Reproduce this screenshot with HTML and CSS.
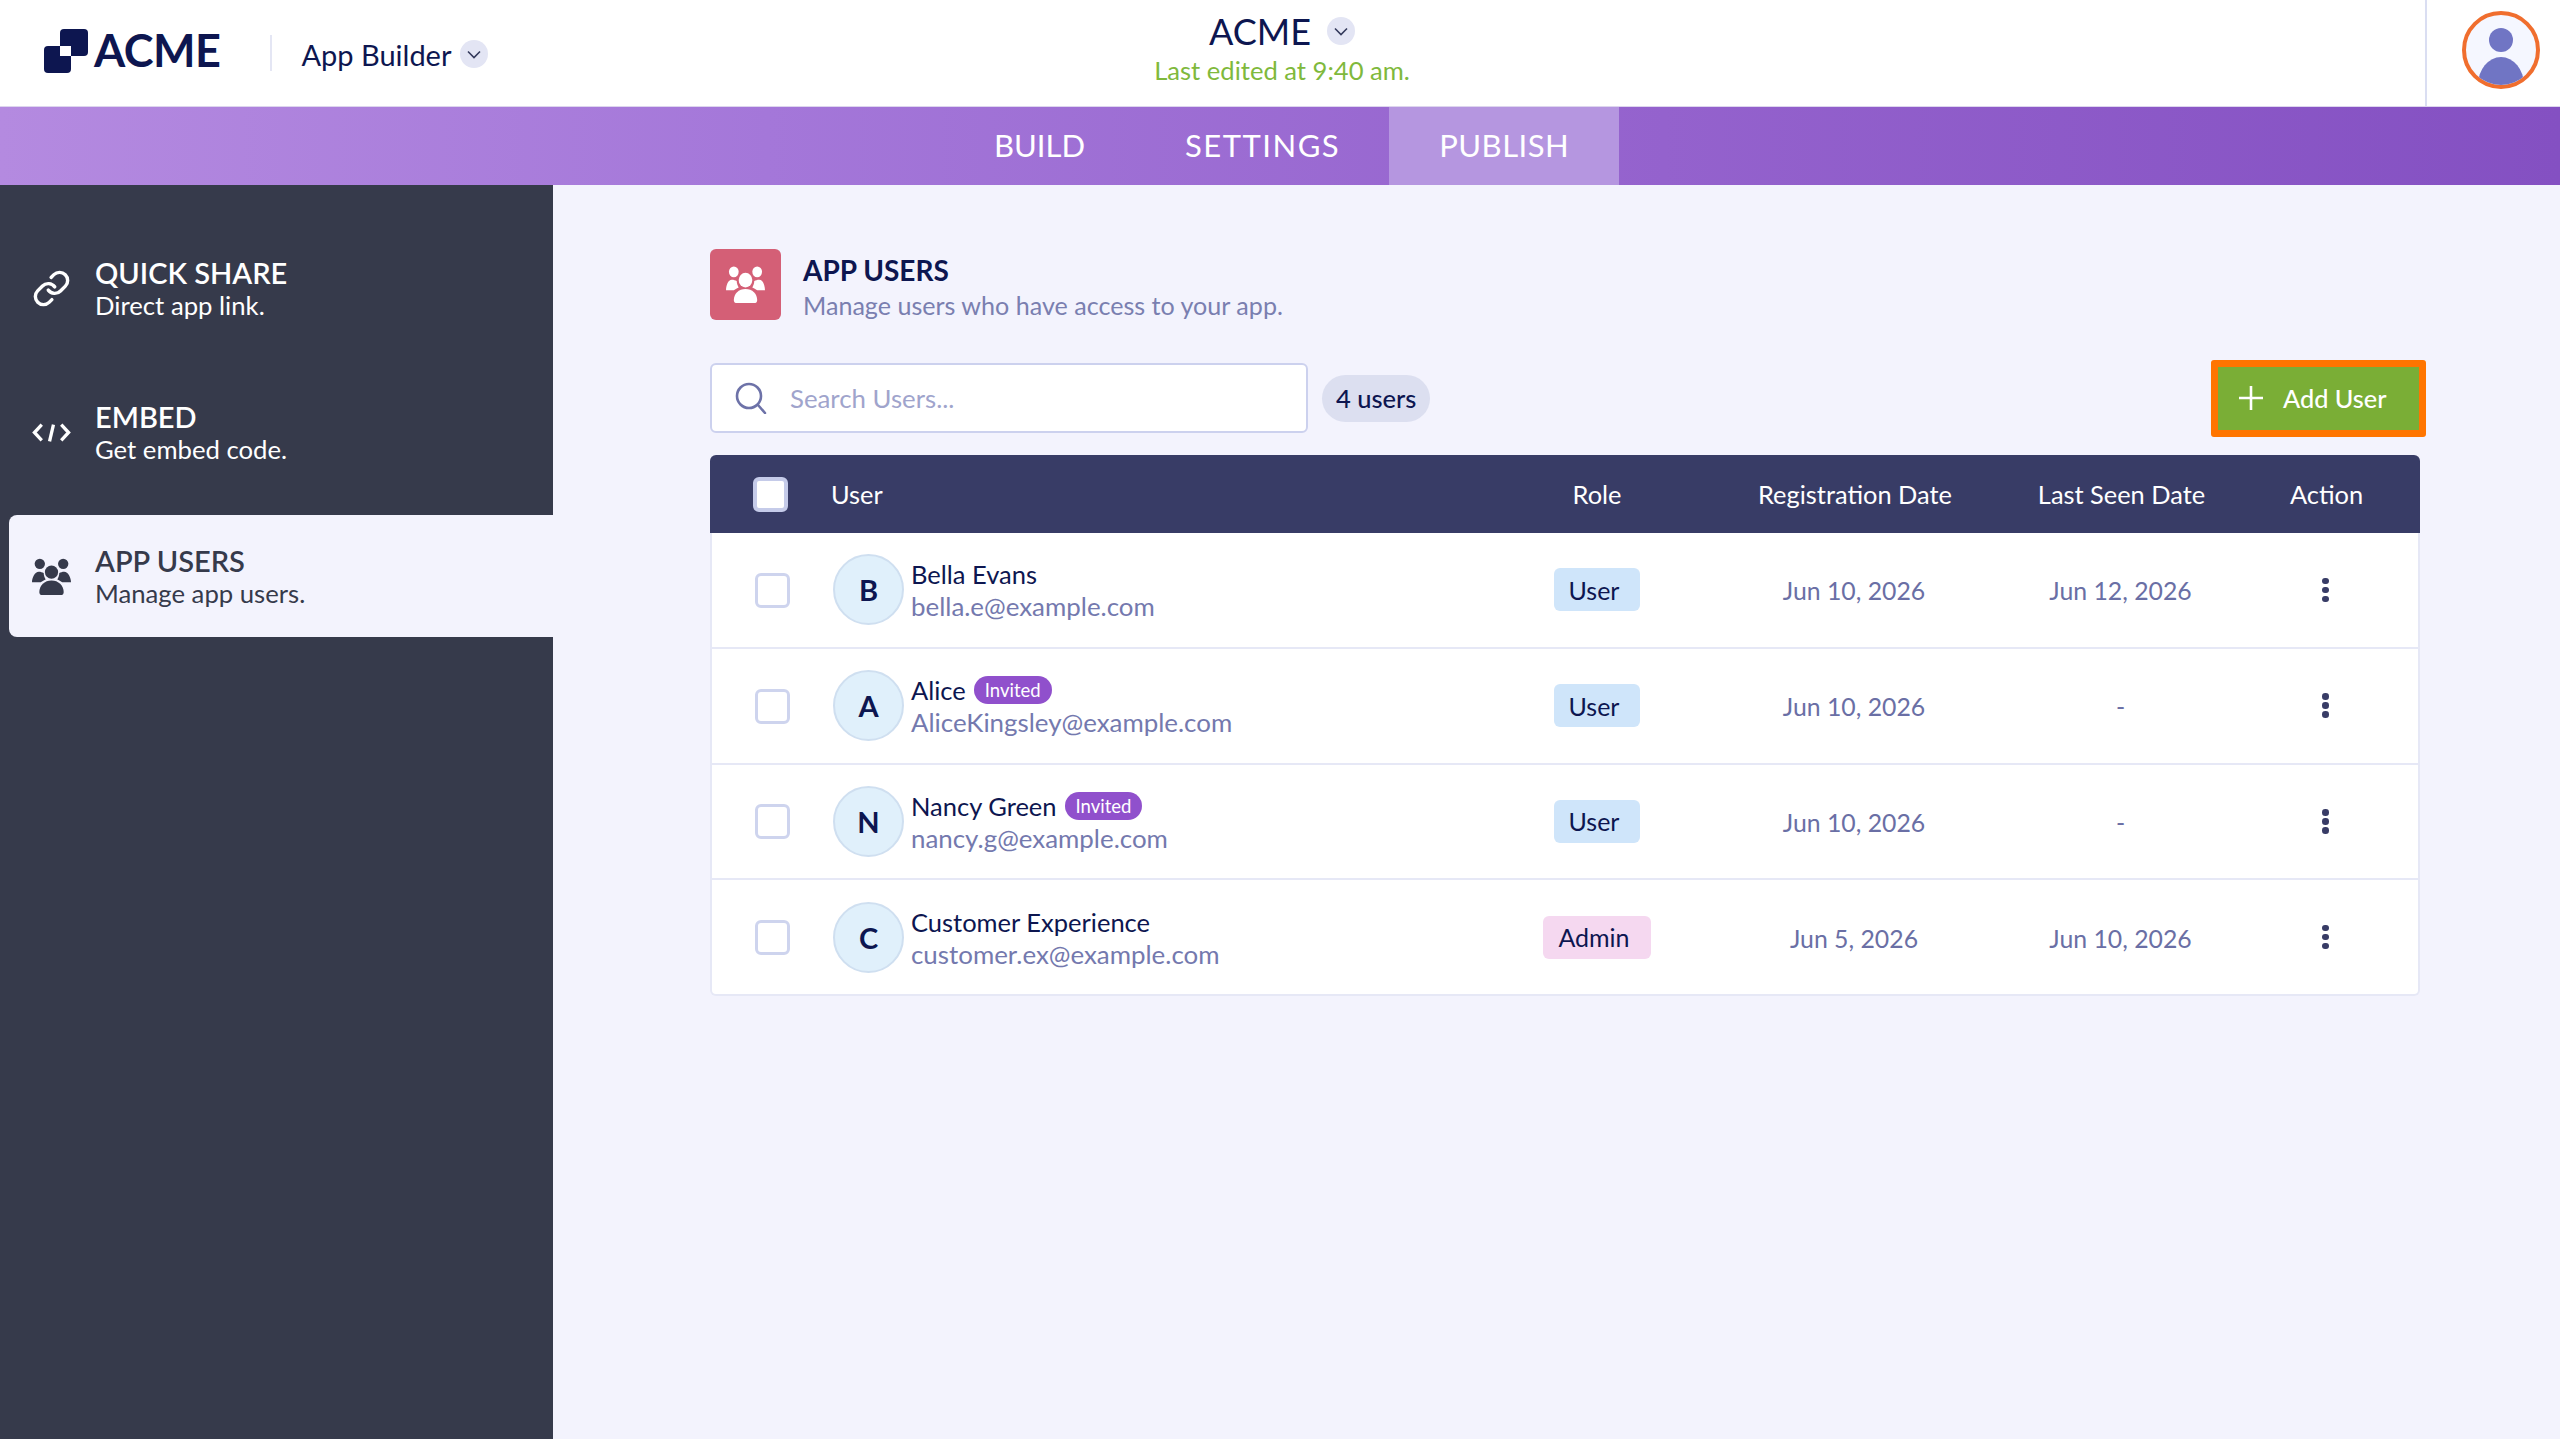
FILE: index.html
```html
<!DOCTYPE html>
<html lang="en">
<head>
<meta charset="utf-8">
<title>App Users</title>
<link rel="stylesheet" href="styles.css">
</head>
<body>
<div class="app">
  <header class="topbar">
    <div class="brand">
      <svg class="logo-mark" viewBox="0 0 44 45" aria-hidden="true">
        <rect x="16" y="1" width="28" height="27" rx="4" fill="#0d1650"/>
        <rect x="0" y="18" width="27" height="27" rx="4" fill="#0d1650"/>
        <rect x="16" y="18" width="11" height="10" fill="#fff"/>
      </svg>
      <span class="logo-text">ACME</span>
      <span class="brand-sep"></span>
      <span class="product">App Builder</span>
      <span class="chev"><svg viewBox="0 0 28 28"><path d="M8 11.5l6 6 6-6" fill="none" stroke="#343a5c" stroke-width="1.6"/></svg></span>
    </div>
    <div class="doc">
      <div class="doc-title"><span>ACME</span><span class="chev"><svg viewBox="0 0 28 28"><path d="M8 11.5l6 6 6-6" fill="none" stroke="#343a5c" stroke-width="1.6"/></svg></span></div>
      <div class="doc-status">Last edited at 9:40 am.</div>
    </div>
    <div class="account">
      <span class="avatar-ring">
        <svg viewBox="0 0 70 70" aria-hidden="true"><circle cx="35" cy="25" r="12" fill="#7075c4"/><path d="M12 70a23 28 0 0 1 46 0z" fill="#7075c4"/></svg>
      </span>
    </div>
  </header>

  <nav class="tabs">
    <a class="tab">BUILD</a>
    <a class="tab tab-wide">SETTINGS</a>
    <a class="tab tab-active">PUBLISH</a>
  </nav>

  <div class="body">
    <aside class="sidebar">
      <div class="side-item">
        <svg class="side-icon" viewBox="0 0 24 24" fill="none" stroke="currentColor" stroke-width="2.1" stroke-linecap="round" stroke-linejoin="round"><path d="M10 13a5 5 0 0 0 7.54.54l3-3a5 5 0 0 0-7.07-7.07l-1.72 1.71"/><path d="M14 11a5 5 0 0 0-7.54-.54l-3 3a5 5 0 0 0 7.07 7.07l1.71-1.71"/></svg>
        <div><div class="side-title">QUICK SHARE</div><div class="side-sub">Direct app link.</div></div>
      </div>
      <div class="side-item">
        <svg class="side-icon" viewBox="0 0 40 20" fill="none" stroke="currentColor" stroke-width="3.4" stroke-linejoin="miter"><path d="M10 2L2.5 10l7.500 8"/><path d="M30 2l7.500 8-7.500 8"/><path d="M22 2l-4 17"/></svg>
        <div><div class="side-title">EMBED</div><div class="side-sub">Get embed code.</div></div>
      </div>
      <div class="side-item side-item-active">
        <svg class="side-icon" viewBox="0 0 40 38" fill="currentColor"><circle cx="8" cy="6" r="5.300"/><circle cx="32" cy="6" r="5.300"/><circle cx="20" cy="14.500" r="6.800"/><path d="M7 14c2 0 3.500.6 5 1.500 0 2.500 1 5 2 6.500-3 1.500-5 3-6 3H0c0-5 3-11 7-11z"/><path d="M33 14c-2 0-3.500.6-5 1.500 0 2.500-1 5-2 6.500 3 1.500 5 3 6 3h8c0-5-3-11-7-11z"/><path d="M20 23c7 0 12.500 5 12.500 12 0 2-1 3-2 3h-21c-1 0-2-1-2-3 0-7 5.500-12 12.500-12z"/></svg>
        <div><div class="side-title">APP USERS</div><div class="side-sub">Manage app users.</div></div>
      </div>
    </aside>

    <main class="main">
      <section class="page-head">
        <span class="page-icon">
          <svg viewBox="0 0 40 38" fill="currentColor"><ellipse cx="8" cy="6" rx="5" ry="5.500"/><ellipse cx="32" cy="6" rx="5" ry="5.500"/><ellipse cx="20" cy="14.500" rx="7" ry="7.500"/><path d="M6 14c2 0 3.500.6 5 1.500 0 2.500 1 5 2 6.500-3 1.500-5 3-6 3H0c0-5 2-11 6-11z"/><path d="M34 14c-2 0-3.500.6-5 1.500 0 2.500-1 5-2 6.500 3 1.500 5 3 6 3h7c0-5-2-11-6-11z"/><path d="M20 23.500c7 0 12 5 12 11.500 0 2-1 3-2 3H10c-1 0-2-1-2-3 0-6.500 5-11.500 12-11.500z"/></svg>
        </span>
        <div class="page-text">
          <h1 class="page-title">APP USERS</h1>
          <p class="page-sub">Manage users who have access to your app.</p>
        </div>
      </section>

      <section class="toolbar">
        <label class="search">
          <svg class="search-icon" viewBox="0 0 32 32" fill="none" stroke="#6d72a8" stroke-width="2.600" stroke-linecap="round"><circle cx="14" cy="14" r="12"/><path d="M23 23l7 8"/></svg>
          <span class="search-ph">Search Users...</span>
        </label>
        <span class="count">4 users</span>
        <button class="add-btn"><svg viewBox="0 0 24 24" fill="none" stroke="#fff" stroke-width="2.600"><path d="M12 0v24M0 12h24"/></svg><span>Add User</span></button>
      </section>

      <section class="table">
        <div class="row row-head">
          <div class="cell-check"><span class="check check-head"></span></div>
          <div>User</div>
          <div class="center">Role</div>
          <div class="center head-date">Registration Date</div>
          <div class="center head-date">Last Seen Date</div>
          <div class="center action">Action</div>
        </div>

        <div class="row">
          <div class="cell-check"><span class="check"></span></div>
          <div class="user"><span class="avatar">B</span><div class="user-text"><div class="name">Bella Evans</div><div class="email">bella.e@example.com</div></div></div>
          <div class="center"><span class="role role-user">User</span></div>
          <div class="center date">Jun 10, 2026</div>
          <div class="center date">Jun 12, 2026</div>
          <div class="action action-cell"><span class="dots"><i></i><i></i><i></i></span></div>
        </div>

        <div class="row">
          <div class="cell-check"><span class="check"></span></div>
          <div class="user"><span class="avatar">A</span><div class="user-text"><div class="name">Alice<span class="invited">Invited</span></div><div class="email">AliceKingsley@example.com</div></div></div>
          <div class="center"><span class="role role-user">User</span></div>
          <div class="center date">Jun 10, 2026</div>
          <div class="center date">-</div>
          <div class="action action-cell"><span class="dots"><i></i><i></i><i></i></span></div>
        </div>

        <div class="row">
          <div class="cell-check"><span class="check"></span></div>
          <div class="user"><span class="avatar">N</span><div class="user-text"><div class="name">Nancy Green<span class="invited">Invited</span></div><div class="email">nancy.g@example.com</div></div></div>
          <div class="center"><span class="role role-user">User</span></div>
          <div class="center date">Jun 10, 2026</div>
          <div class="center date">-</div>
          <div class="action action-cell"><span class="dots"><i></i><i></i><i></i></span></div>
        </div>

        <div class="row">
          <div class="cell-check"><span class="check"></span></div>
          <div class="user"><span class="avatar">C</span><div class="user-text"><div class="name">Customer Experience</div><div class="email">customer.ex@example.com</div></div></div>
          <div class="center"><span class="role role-admin">Admin</span></div>
          <div class="center date">Jun 5, 2026</div>
          <div class="center date">Jun 10, 2026</div>
          <div class="action action-cell"><span class="dots"><i></i><i></i><i></i></span></div>
        </div>
      </section>
    </main>
  </div>
</div>
</body>
</html>
```
FILE: styles.css
```css
* { box-sizing: border-box; }
html, body { margin: 0; padding: 0; }
body { font-family: "Lato", "Liberation Sans", sans-serif; color: #0d1650; background: #f3f3fd; }
.app { width: 2560px; height: 1439px; display: flex; flex-direction: column; overflow: hidden; }

.topbar { height: 107px; flex: none; background: #fff; display: grid; grid-template-columns: 1fr auto 1fr; border-bottom: 1px solid #ddd5ee; }
.brand { display: flex; align-items: center; padding-left: 44px; }
.logo-mark { width: 44px; height: 45px; margin-top: -6px; }
.logo-text { font-size: 45px; font-weight: 700; margin-left: 6px; margin-top: -7px; letter-spacing: -.5px; }
.brand-sep { width: 2px; height: 36px; background: #e4e6f4; margin: 0 29px 0 50px; }
.product { font-size: 29px; margin-top: 2px; }
.chev { width: 28px; height: 28px; border-radius: 50%; background: #e3e5f4; display: inline-flex; margin-left: 9px; flex: none; }
.product + .chev { margin-top: 2px; }
.chev svg { width: 28px; height: 28px; }
.doc { display: flex; flex-direction: column; align-items: center; padding-top: 11px; margin-left: 4px; }
.doc-title { display: flex; align-items: center; font-size: 36px; line-height: 40px; }
.doc-title .chev { margin-left: 16px; }
.doc-status { font-size: 25.6px; line-height: 30px; margin-top: 4px; color: #7fb93c; }
.account { display: flex; justify-content: flex-end; }
.account::before { content: ""; width: 2px; background: #dadef2; margin-left: auto; }
.avatar-ring { width: 78px; height: 78px; border: 4px solid #f06e2e; border-radius: 50%; background: #f5f7ff; margin: 11px 20px 0 35px; overflow: hidden; display: block; }
.avatar-ring svg { width: 70px; height: 70px; display: block; }

.tabs { height: 78px; flex: none; padding-left: 944px; display: flex; background: linear-gradient(90deg, #b48ae0 0%, #a477d9 30%, #9462cd 65%, #8450c2 100%); }
.tab { padding: 0 50px 2px; display: flex; align-items: center; color: #fff; font-size: 31px; }
.tab-wide { letter-spacing: 1.5px; padding-right: 49px; }
.tab-active { background: #b596e0; letter-spacing: .5px; padding-left: 50px; }

.body { flex: 1; display: flex; min-height: 0; }
.sidebar { width: 553px; flex: none; background: #363a4b; padding: 42px 0 0 9px; color: #fff; display: flex; flex-direction: column; gap: 22px; }
.side-item { height: 122px; display: flex; align-items: center; gap: 24px; padding-left: 23px; }
.side-item-active { background: #f3f3fd; color: #363a4b; border-radius: 8px 0 0 8px; }
.side-icon { width: 39px; height: 39px; flex: none; }
.side-title { font-size: 29px; line-height: 33px; font-weight: 600; margin-bottom: 1px; }
.side-sub { font-size: 25.7px; line-height: 31px; }

.main { flex: 1; padding: 64px 140px 0 157px; min-width: 0; }
.page-head { display: flex; align-items: center; gap: 22px; height: 71px; }
.page-icon { width: 71px; height: 71px; border-radius: 6px; background: #d45f76; color: #fff; display: flex; align-items: center; justify-content: center; }
.page-icon svg { width: 39px; height: 37px; }
.page-text { padding-top: 5px; }
.page-title { margin: 0; font-size: 28px; line-height: 32px; font-weight: 700; }
.page-sub { margin: 3px 0 0; font-size: 25.1px; line-height: 32px; color: #7a7fb0; }

.toolbar { height: 70px; margin-top: 43px; display: flex; align-items: center; }
.search { width: 598px; height: 70px; background: #fff; border: 2px solid #ccd1ee; border-radius: 6px; display: flex; align-items: center; padding-left: 23px; }
.search-icon { width: 32px; height: 32px; flex: none; }
.search-ph { margin-left: 23px; font-size: 25.8px; color: #a0a4cc; }
.count { margin-left: 14px; height: 47px; padding: 0 14px; border-radius: 24px; background: #dcdff0; display: flex; align-items: center; font-size: 25.5px; font-weight: 500; }
.add-btn { margin: 0 -6px 0 auto; width: 215px; height: 77px; border: 7px solid #ff7500; border-radius: 3px; background: #7aae36; color: #fff; font: 500 25.3px "Lato", sans-serif; display: flex; align-items: center; padding: 0 0 0 21px; flex: none; }
.add-btn svg { width: 24px; height: 24px; }
.add-btn span { margin-left: 20px; }

.table { margin-top: 22px; border-radius: 6px; background: #fff; border: 2px solid #e6e8f6; border-top: 0; }
.row { display: grid; grid-template-columns: 119px 666px 200px 314px 219px 188px; align-items: center; height: 115.8px; border-bottom: 2px solid #e6e8f6; font-size: 25.4px; }
.row:last-child { border-bottom: 0; height: 113.5px; }
.row-head { height: 78px; margin: 0 -2px; grid-template-columns: 121px 666px 200px 314px 219px 190px; background: #383c66; color: #fff; border-radius: 6px 6px 0 0; border-bottom: 0; }
.center { text-align: center; }
.head-date { padding-left: 2px; }
.action { padding-left: 3px; }
.action-cell { display: flex; justify-content: center; }
.cell-check { padding-left: 43px; display: flex; }
.row:not(.row-head) .check { margin-top: 1px; }
.check { width: 35px; height: 35px; border: 3px solid #ced4ee; border-radius: 6px; background: #fff; display: block; }
.check-head { border: 4px solid #c5cbe9; }
.user { display: flex; align-items: center; padding-left: 2px; }
.user-text { padding-top: 2px; }
.avatar { width: 71px; height: 71px; border-radius: 50%; background: #e0f0fb; border: 2px solid #cfdff0; display: flex; align-items: center; justify-content: center; font-size: 29px; font-weight: 700; flex: none; margin-right: 7px; }
.name { font-size: 25.5px; line-height: 30px; display: flex; align-items: center; }
.email { font-size: 25.9px; line-height: 32px; color: #7479ae; margin-top: 1px; }
.invited { height: 28px; padding: 0 11px; margin-left: 8px; border-radius: 14px; background: #9050cc; color: #fff; font-size: 18.5px; line-height: 28px; }
.role { display: inline-flex; align-items: center; height: 43px; border-radius: 6px; padding: 0 21px 0 15px; font-size: 25px; }
.role-user { background: #cfe5fa; }
.role-admin { background: #f5d8f0; }
.date { color: #6a6fa5; font-size: 24.8px; padding-top: 2px; }
.dots { display: flex; flex-direction: column; gap: 2.5px; }
.dots i { width: 6.500px; height: 6.500px; border-radius: 50%; background: #383c66; display: block; }
```
